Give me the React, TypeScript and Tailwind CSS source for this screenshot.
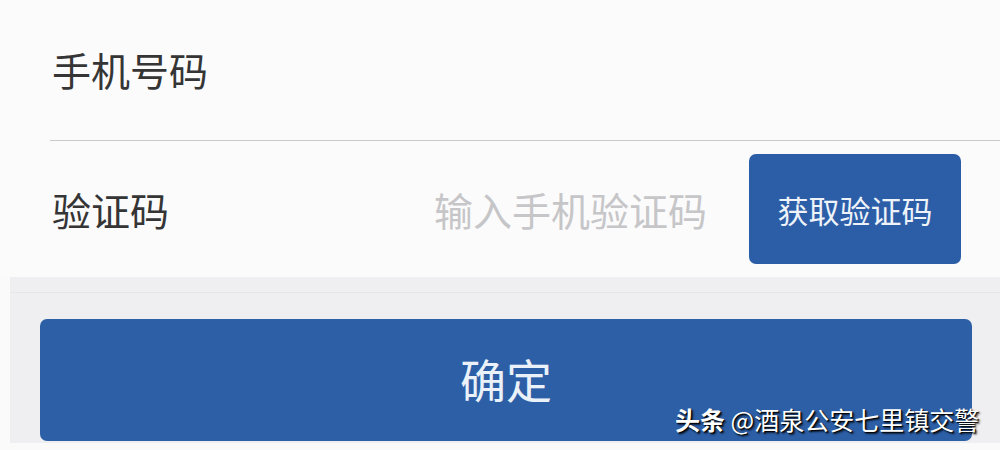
const cjk = "font-['Noto_Sans_CJK_SC','Noto_Sans',sans-serif]";

export default function App() {
  return (
    <div className={`relative w-[1000px] h-[450px] overflow-hidden bg-[#fafafb] ${cjk}`}>
      {/* form card */}
      <div className="h-[277px] bg-[#fbfbfc] flex flex-col">
        <div className="h-[140px] flex items-center pl-[52px] pb-[2px]">
          <span className="text-[39px] leading-none text-[#353535]">手机号码</span>
        </div>
        <div className="ml-[50px] h-px bg-[#cacaca]" />
        <div className="flex-1 flex items-center pl-[52px] pr-[39px]">
          <span className="text-[39px] leading-none text-[#353535]">验证码</span>
          <span className="ml-auto mr-[42px] text-[39px] leading-none text-[#c6c6c8]">输入手机验证码</span>
          <button className="w-[212px] h-[110px] rounded-[7px] bg-[#2c5ea7] text-[31px] leading-none text-[#eef3fa] flex items-center justify-center">
            获取验证码
          </button>
        </div>
      </div>

      {/* action area */}
      <div className="ml-[10px] h-[166px] bg-[#efeff2] flex flex-col">
        <div className="h-[15px]" />
        <div className="h-px bg-[#e6e6ea]" />
        <div className="flex-1 pl-[30px] pr-[28px] pt-[26px] pb-[2px]">
          <button className="w-full h-full rounded-[7px] bg-[#2d5fa7] text-[46px] leading-none text-[#eaf1f9] flex items-center justify-center pb-[4px]">
            确定
          </button>
        </div>
      </div>

      {/* source tag */}
      <div className="absolute left-[675px] top-[407px] text-[25px] leading-none text-white whitespace-nowrap [text-shadow:1px_1px_1px_#000,2px_2px_2px_rgba(0,0,0,0.7)]">
        <span className="font-bold">头条</span>
        <span> @酒泉公安七里镇交警</span>
      </div>
    </div>
  );
}
